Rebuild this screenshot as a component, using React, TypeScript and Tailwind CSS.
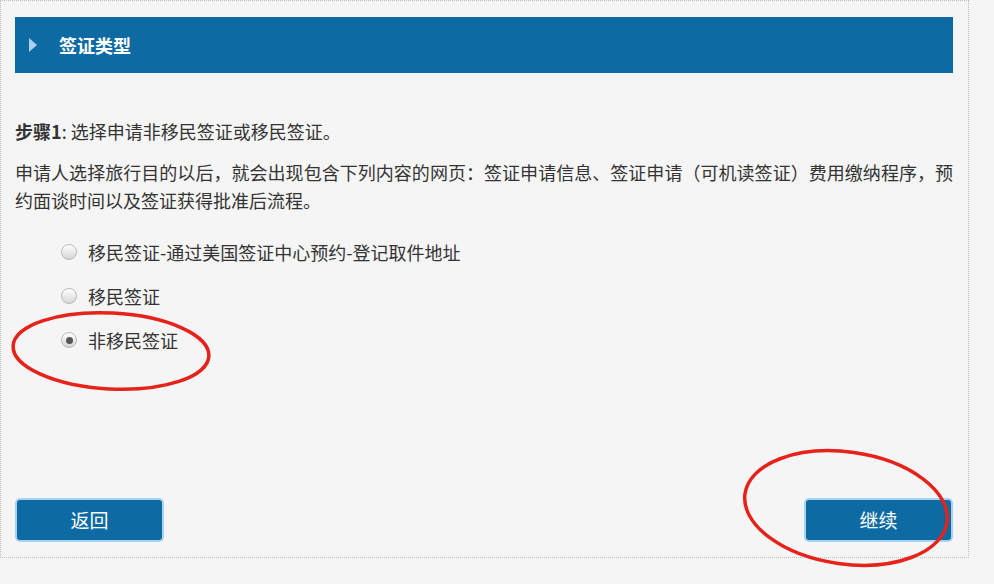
import React from "react";

const font = { fontFamily: '"Microsoft YaHei", "Noto Sans CJK SC", "Noto Sans", sans-serif' };

function Radio({ checked, label }: { checked?: boolean; label: string }) {
  return (
    <div className="flex items-center h-[44px] pl-[46px]">
      <span className="w-[16px] h-[16px] rounded-full border border-[#b8b8b8] bg-gradient-to-b from-[#ffffff] to-[#d6d6d6] flex items-center justify-center shadow-[inset_0_1px_1px_rgba(255,255,255,0.8)]">
        {checked && <span className="w-[7px] h-[7px] rounded-full bg-[#555555]" />}
      </span>
      <span className="ml-[11px] text-[18px] text-[#333333] leading-[28px]">{label}</span>
    </div>
  );
}

function Btn({ label }: { label: string }) {
  return (
    <button className="w-[149px] h-[44px] rounded-[5px] border-2 border-[#aad3f3] bg-[#0d6aa3] text-white text-[19px] flex items-center justify-center">
      {label}
    </button>
  );
}

export default function App() {
  return (
    <div className="relative w-[994px] h-[584px] bg-[#f5f5f5] overflow-hidden" style={font}>
      <div className="w-[969px] h-[558px] border border-dotted border-[#bdbdbd] pl-[14px] pr-[15px] pt-[16px] pb-[15px] flex flex-col">
        <div className="h-[56px] bg-[#0d6aa3] flex items-center pl-[14px]">
          <svg width="8" height="14" viewBox="0 0 8 14" className="mr-[22px]">
            <polygon points="0,0 8,7 0,14" fill="#a9cfee" />
          </svg>
          <span className="text-white font-bold text-[18px]">签证类型</span>
        </div>
        <p className="mt-[44px] text-[18px] leading-[28px] text-[#333333]">
          <b>步骤1</b>: 选择申请非移民签证或移民签证。
        </p>
        <p className="mt-[13px] text-[18px] leading-[28px] text-[#333333] text-justify">
          申请人选择旅行目的以后，就会出现包含下列内容的网页：签证申请信息、签证申请（可机读签证）费用缴纳程序，预约面谈时间以及签证获得批准后流程。
        </p>
        <div className="mt-[16px] flex flex-col">
          <Radio label="移民签证-通过美国签证中心预约-登记取件地址" />
          <Radio label="移民签证" />
          <Radio checked label="非移民签证" />
        </div>
        <div className="mt-auto flex justify-between">
          <Btn label="返回" />
          <Btn label="继续" />
        </div>
      </div>
      <svg className="absolute left-0 top-0 pointer-events-none" width="994" height="584">
        <ellipse cx="111" cy="351" rx="98" ry="38" fill="none" stroke="#e5231b" strokeWidth="3.5" transform="rotate(3 111 351)" />
        <ellipse cx="846" cy="508" rx="102" ry="56" fill="none" stroke="#e5231b" strokeWidth="3.5" transform="rotate(8 846 508)" />
      </svg>
    </div>
  );
}
